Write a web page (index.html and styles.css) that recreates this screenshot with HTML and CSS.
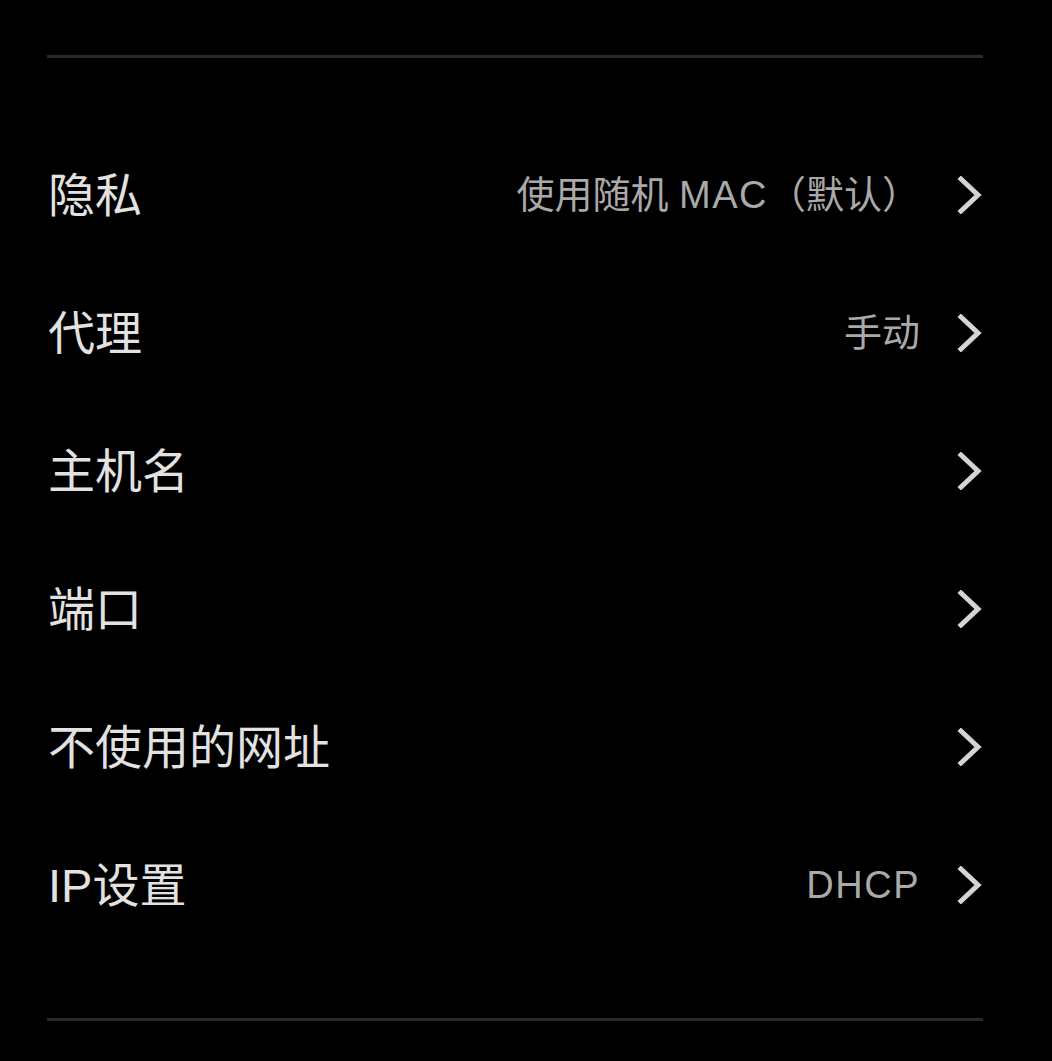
FILE: index.html
```html
<!DOCTYPE html>
<html lang="zh-CN">
<head>
<meta charset="utf-8">
<link rel="stylesheet" href="styles.css">
</head>
<body>
<div class="page">
  <div class="divider top"></div>
  <ul class="list">
    <li class="row"><span class="label">隐私</span><span class="value">使用随机 <span class="latin">MAC</span>（默认）</span><svg class="chev" viewBox="0 0 26 38"><path d="M4 3 L21 19 L4 35" /></svg></li>
    <li class="row"><span class="label">代理</span><span class="value">手动</span><svg class="chev" viewBox="0 0 26 38"><path d="M4 3 L21 19 L4 35" /></svg></li>
    <li class="row"><span class="label">主机名</span><span class="value"></span><svg class="chev" viewBox="0 0 26 38"><path d="M4 3 L21 19 L4 35" /></svg></li>
    <li class="row"><span class="label">端口</span><span class="value"></span><svg class="chev" viewBox="0 0 26 38"><path d="M4 3 L21 19 L4 35" /></svg></li>
    <li class="row"><span class="label">不使用的网址</span><span class="value"></span><svg class="chev" viewBox="0 0 26 38"><path d="M4 3 L21 19 L4 35" /></svg></li>
    <li class="row"><span class="label">IP设置</span><span class="value"><span class="latin">DHCP</span></span><svg class="chev" viewBox="0 0 26 38"><path d="M4 3 L21 19 L4 35" /></svg></li>
  </ul>
  <div class="divider bottom"></div>
</div>
</body>
</html>
```
FILE: styles.css
```css
html, body {
  margin: 0;
  padding: 0;
  background: #000;
}
body {
  font-family: "Liberation Sans", "Noto Sans CJK SC", sans-serif;
  width: 1052px;
  height: 1061px;
  overflow: hidden;
}
.page {
  padding: 55px 69px 0 47px;
}
.divider {
  height: 3px;
  background: #2a2a2a;
}
.list {
  list-style: none;
  margin: 68px 0 64px;
  padding: 0;
}
.row {
  height: 138px;
  display: flex;
  align-items: center;
}
.label {
  flex: 1;
  color: #e2e2e2;
  font-size: 47px;
  line-height: 1;
  padding-left: 1px;
}
.value {
  color: #a9a9a9;
  font-size: 38px;
  line-height: 1;
  margin-right: 37px;
}
.latin {
  letter-spacing: 1.5px;
}
.value:empty {
  margin-right: 0;
}
.chev {
  width: 26px;
  height: 38px;
  flex: none;
}
.chev path {
  fill: none;
  stroke: #d4d4d4;
  stroke-width: 5;
  stroke-linecap: square;
  stroke-linejoin: miter;
}
```
